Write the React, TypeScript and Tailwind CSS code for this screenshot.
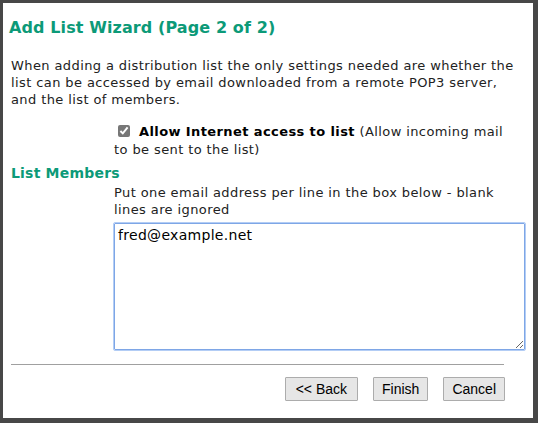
import { useState } from "react";

export default function App() {
  const [allow, setAllow] = useState(true);
  const [members, setMembers] = useState("fred@example.net");

  return (
    <div className="w-[538px] h-[423px] bg-[#474747] pl-[3px] pt-[3px] pr-[5px] pb-[5px] font-['DejaVu_Sans',Verdana,sans-serif] text-[13px] tracking-[0.4px] text-[#222]">
      <div className="h-full bg-white pl-[8px] pr-[10px] flex flex-col">
        <h1 className="mt-[14px] -ml-[2px] text-[16px] tracking-[0.1px] font-bold leading-[22px] text-[#0c9a78]">
          Add List Wizard (Page 2 of 2)
        </h1>

        <p className="mt-[18px] leading-[17px]">
          When adding a distribution list the only settings needed are whether the
          list can be accessed by email downloaded from a remote POP3 server,
          and the list of members.
        </p>

        <div className="mt-[15px] pl-[103px] pr-[10px] leading-[18px]">
          <label className="block">
            <input
              type="checkbox"
              checked={allow}
              onChange={(e) => setAllow(e.target.checked)}
              className="w-[12px] h-[12px] ml-[4px] mr-[9px] align-[-1px] accent-[#777]"
            />
            <span className="font-bold text-black">Allow Internet access to list</span>{" "}
            (Allow incoming mail to be sent to the list)
          </label>
        </div>

        <h2 className="mt-[3px] text-[14px] tracking-[0.2px] font-bold leading-[22px] text-[#0c9a78]">
          List Members
        </h2>

        <div className="pl-[103px]">
          <p className="leading-[17px]">
            Put one email address per line in the box below - blank lines are ignored
          </p>
          <textarea
            value={members}
            onChange={(e) => setMembers(e.target.value)}
            className="mt-[5px] block w-[411px] h-[127px] border border-[#7ea6e6] outline outline-1 outline-[#b3cdf5] rounded-[1px] px-[3px] py-[2px] text-[14px] tracking-[0.3px] leading-[18px] text-black font-['DejaVu_Sans',Verdana,sans-serif] resize-y"
          />
        </div>

        <hr className="mt-[14px] mr-[19px] border-0 border-t border-[#a0a0a0]" />

        <div className="mt-[12px] mr-[18px] flex justify-end gap-[15px] font-['Liberation_Sans',Arial,sans-serif] text-[14px] tracking-normal text-black">
          <button className="h-[24px] px-[10px] border border-[#acacac] bg-[#e6e6e6] rounded-[1px]">
            &lt;&lt; Back
          </button>
          <button className="h-[24px] px-[8px] border border-[#acacac] bg-[#e6e6e6] rounded-[1px]">
            Finish
          </button>
          <button className="h-[24px] px-[8px] border border-[#acacac] bg-[#e6e6e6] rounded-[1px]">
            Cancel
          </button>
        </div>
      </div>
    </div>
  );
}
